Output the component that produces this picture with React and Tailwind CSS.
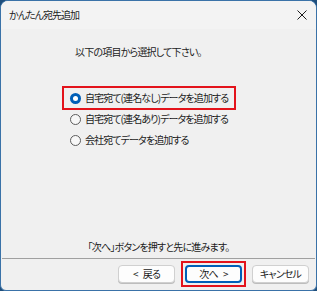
import React from "react";

const font = {
  fontFamily: '"Noto Sans CJK JP", "Noto Sans", sans-serif',
};

const txt = "text-[10px] leading-[14px] tracking-[-0.8px] text-[#1b1b1b] [font-feature-settings:'palt'] whitespace-nowrap";

function Radio({ checked, label, boxed }) {
  return (
    <div
      className={
        "flex items-center h-[20px] pl-[6px] " +
        (boxed ? "outline-2 outline-[#e3131b] w-[170px]" : "")
      }
    >
      {checked ? (
        <span className="w-[11px] h-[11px] rounded-full bg-[#005fb8] flex items-center justify-center shrink-0">
          <span className="w-[5px] h-[5px] rounded-full bg-white" />
        </span>
      ) : (
        <span className="w-[11px] h-[11px] rounded-full border border-[#5c5c5c] bg-[#f7f7f7] shrink-0" />
      )}
      <span className={"ml-[4px] tracking-[-0.9px] " + txt}>{label}</span>
    </div>
  );
}

function Btn({ children, primary }) {
  return (
    <div
      className={
        "w-[57px] h-[18px] rounded-[4px] bg-[#fdfdfd] flex items-center justify-center " +
        txt +
        (primary
          ? " border-2 border-[#005fb8]"
          : " border border-[#d0d0d0] shadow-[0_1px_0_#bdbdbd]")
      }
    >
      {children}
    </div>
  );
}

export default function App() {
  return (
    <div className="w-[317px] h-[291px] bg-[#1f4f7d]" style={font}>
      <div className="w-full h-full rounded-t-[8px] rounded-b-[6px] border border-[#3a72a8] bg-[#f0f0f0] flex flex-col overflow-hidden">
        <div className="h-[28px] shrink-0 flex items-center justify-between pl-[8px] pr-[7px] bg-[#f3f3f3]">
          <span className={"tracking-[-1px] " + txt}>かんたん宛先追加</span>
          <svg width="10" height="10" viewBox="0 0 10 10" className="mr-[2px]">
            <path d="M0.5 0.5 L9.5 9.5 M9.5 0.5 L0.5 9.5" stroke="#1b1b1b" strokeWidth="1" />
          </svg>
        </div>
        <div className="flex-1 flex flex-col">
          <div className={"mt-[16px] pl-[74px] " + txt}>以下の項目から選択して下さい。</div>
          <div className="mt-[29px] ml-[63px] flex flex-col gap-[1px]">
            <Radio checked boxed label="自宅宛て(連名なし)データを追加する" />
            <Radio label="自宅宛て(連名あり)データを追加する" />
            <Radio label="会社宛てデータを追加する" />
          </div>
          <div className="flex-1" />
          <div className={"text-center mb-[4px] " + txt}>「次へ」ボタンを押すと先に進みます。</div>
          <div className="mx-[1px] h-[2px] border-t border-[#a0a0a0] border-b-white" />
          <div className="h-[30px] flex items-start justify-end pt-[5px] pr-[7px] gap-[10px]">
            <Btn>
              <span>&lt;</span>
              <span className="ml-[5px]">戻る</span>
            </Btn>
            <div className="outline-2 outline-[#e3131b] outline-offset-[2px]">
              <Btn primary>
                <span>次へ</span>
                <span className="ml-[5px]">&gt;</span>
              </Btn>
            </div>
            <Btn>キャンセル</Btn>
          </div>
        </div>
      </div>
    </div>
  );
}
